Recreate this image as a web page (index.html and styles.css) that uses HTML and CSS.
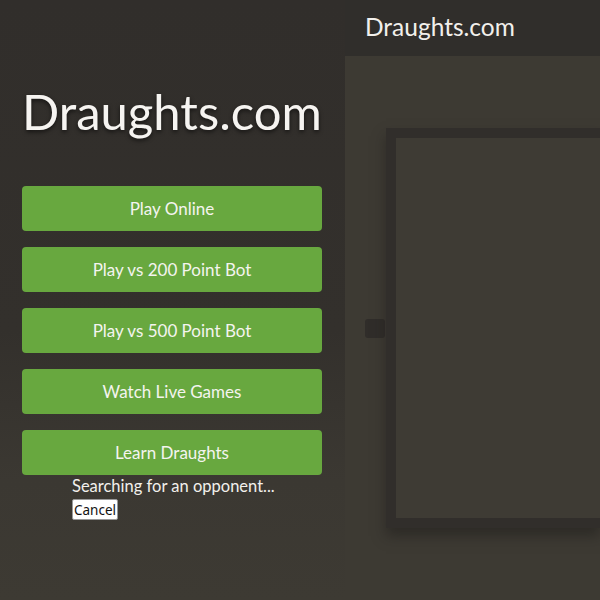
FILE: index.html
```html
<!DOCTYPE html>
<html lang="en">
<head>
    <meta charset="UTF-8">
    <meta name="viewport" content="width=device-width, initial-scale=1.0">
    <title>Draughts.com</title>
    <link rel="stylesheet" href="styles.css">
</head>
<body>
    <div id="menu">
        <h1 class="title">Draughts.com</h1>
        <div class="buttons">
            <button class="menuButton">Play Online</button>
            <button class="menuButton">Play vs 200 Point Bot</button>
            <button class="menuButton">Play vs 500 Point Bot</button>
            <button class="menuButton">Watch Live Games</button>
            <button class="menuButton">Learn Draughts</button>
        </div>
        <div class="searching">
            <div class="searchText">Searching for an opponent...</div>
            <button class="cancelButton">Cancel</button>
        </div>
    </div>

    <div id="main">
        <div class="topBar">Draughts.com</div>
        <div class="gameArea">
            <div class="sideMarker"></div>
            <div class="board">
                <div class="boardInner"></div>
            </div>
        </div>
    </div>
</body>
</html>
```

FILE: styles.css
```css
html, body{
    margin: 0;
    height: 100%;
}
body{
    display: flex;
    background: #3d3a33;
    font-family: "Lato", "Noto Sans", sans-serif;
    color: #f2f0ec;
    overflow: hidden;
}

#menu{
    width: 345px;
    flex-shrink: 0;
    box-sizing: border-box;
    padding: 0 23px 0 22px;
    background: linear-gradient(180deg, #312e2b 0%, #33302c 55%, #3b3832 80%, #3d3a33 100%);
}
.title{
    margin: 82px 0 46px 0;
    font-size: 49px;
    font-weight: 400;
    line-height: 58px;
    color: #f6f4f1;
    text-shadow: 0 2px 4px rgba(0, 0, 0, 0.6);
}
.buttons{
    display: flex;
    flex-direction: column;
    gap: 16px;
}
.menuButton{
    height: 45px;
    border: none;
    border-radius: 4px;
    background: #68a83f;
    color: #f4f4ef;
    font-family: inherit;
    font-size: 17px;
}

.searching{
    padding-left: 50px;
    margin-top: 0;
}
.searchText{
    font-size: 16.5px;
    line-height: 22px;
}
.cancelButton{
    margin-top: 2px;
    font-family: "Noto Sans", sans-serif;
    font-size: 13.5px;
    padding: 0 1px;
    height: 21px;
    border: 1px solid #999;
    border-radius: 2px;
    background: #fff;
    color: #111;
}

#main{
    flex: 1;
    display: flex;
    flex-direction: column;
}
.topBar{
    height: 56px;
    box-sizing: border-box;
    padding: 12px 0 0 20px;
    background: #302e2b;
    font-size: 24.5px;
}
.gameArea{
    display: flex;
    align-items: center;
    margin-top: 72px;
    padding-left: 20px;
}
.sideMarker{
    width: 20px;
    height: 19px;
    border-radius: 3px;
    background: #302d2a;
    margin-right: 1px;
}
.board{
    flex: 1;
    height: 400px;
    box-sizing: border-box;
    padding: 10px 0 10px 10px;
    background: #312e2b;
    box-shadow: 0 8px 12px rgba(30, 28, 25, 0.5);
}
.boardInner{
    height: 100%;
    background: #3e3b34;
}
```
